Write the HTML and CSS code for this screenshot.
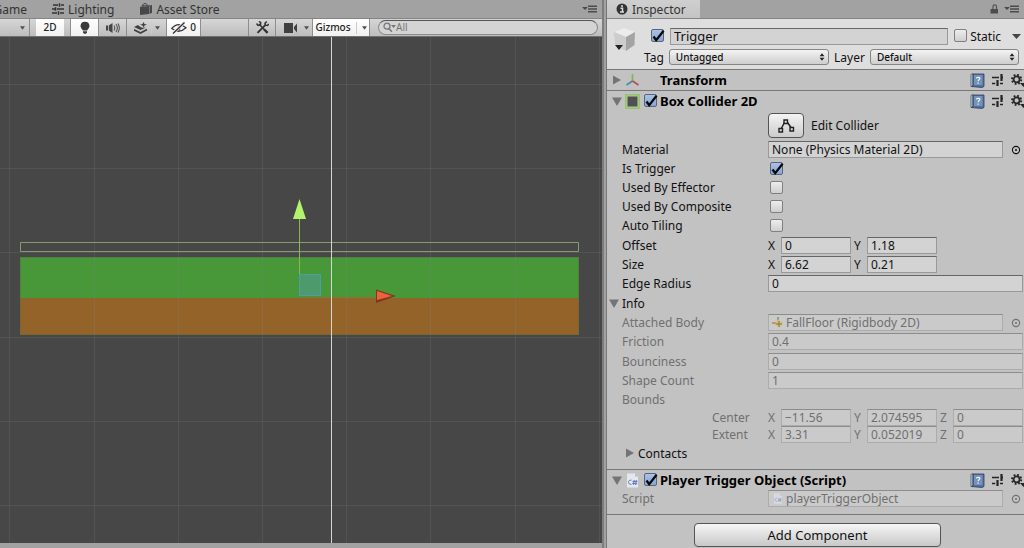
FILE: index.html
```html
<!DOCTYPE html>
<html lang="en">
<head>
<meta charset="utf-8">
<meta name="viewport" content="width=device-width, initial-scale=1">
<title>Scene and Inspector</title>
<link rel="stylesheet" href="styles.css">
</head>
<body>
<svg class="defs" aria-hidden="true">
  <symbol id="check" viewBox="0 0 14 14"><path d="M2.5 7.5 L5.2 11.2 L12.6 1.8" fill="none" stroke="#0a0a0a" stroke-width="2.3"/></symbol>
  <symbol id="menu" viewBox="0 0 16 8"><path d="M0 2h6L3 5z M6 .5h9v1.500H6z M6 3.300h9v1.500H6z M6 6.100h9v1.500H6z" fill="#4b4b4b"/></symbol>
  <symbol id="down" viewBox="0 0 6 4"><path d="M0 0h6L3 4z" fill="#505050"/></symbol>
  <symbol id="updown" viewBox="0 0 6 8"><path d="M0.6 3.3L3 0.2l2.4 3.1z M0.6 4.7L3 7.800l2.400-3.100z" fill="#222"/></symbol>
  <symbol id="fold" viewBox="0 0 10 9"><path d="M0 .5h10L5 9z" fill="#747474"/></symbol>
  <symbol id="unfold" viewBox="0 0 10 10"><path d="M1 .5v9L9 5z" fill="#747474"/></symbol>
  <symbol id="help" viewBox="0 0 15 15"><path d="M1 1.5L3 .5v12.7l-2 .3z" fill="#cfd8e2" stroke="#34465f" stroke-width=".7"/><path d="M3 1h11v12.4l-2 1.1L1.4 13.5 3 12.6z" fill="#52719d" stroke="#2e405c" stroke-width=".8"/><path d="M4 2h8.500v10H4z" fill="#7492ba"/><path d="M6.400 5.400c.1-1.500 3.500-1.500 3.400.1 0 1.200-1.700 1.200-1.700 2.700M8.100 9.400v1.300" fill="none" stroke="#eef4fb" stroke-width="1.200"/></symbol>
  <symbol id="preset" viewBox="0 0 12 12"><path d="M0 3.500h7M9.500 3.500H11M0 9.500h3.200M8 9.500h3" stroke="#242424" stroke-width="1.500"/><path d="M9.500 0v7M5.500 6v6" stroke="#242424" stroke-width="2.200"/></symbol>
  <symbol id="gear" viewBox="0 0 13 13"><circle cx="5.600" cy="5.400" r="4.600" fill="none" stroke="#262626" stroke-width="1.900" stroke-dasharray="1.800 1.810"/><circle cx="5.600" cy="5.400" r="3" fill="none" stroke="#262626" stroke-width="1.800"/><path d="M9 9h7l-3.500 4z" fill="#262626"/></symbol>
  <symbol id="pick" viewBox="0 0 10 10"><circle cx="5" cy="5" r="3.600" fill="none" stroke="currentColor" stroke-width="1.100"/><circle cx="5" cy="5" r="1" fill="currentColor"/></symbol>
  <symbol id="script" viewBox="0 0 12 15"><path d="M.5.5h8l3 3v11H.5z" fill="#e4e8ed"/><path d="M8.500.5v3h3z" fill="#b5bdc8"/><path d="M5 7.200C1 6.500 1 12 5 11.300M6 8.400h5M5.700 10.400h5M7.700 7l-.6 5M9.800 7l-.6 5" fill="none" stroke="#5574c4" stroke-width=".95"/></symbol>
</svg>
<main class="editor">
  <section class="scene" aria-label="Scene">
    <nav class="tabs">
      <a class="tab tab-game" href="#game">Game</a>
      <a class="tab tab-light" href="#lighting">
        <svg width="12" height="12" viewBox="0 0 12 12"><path d="M1 2h5M9 2h3M0 6h3M5 6h7M0 10h5M8 10h4" stroke="#333" stroke-width="1.300"/><path d="M7.500.2v3.600M3.500 4.200v3.600M6.500 8.200v3.600" stroke="#333" stroke-width="1.500"/></svg>Lighting</a>
      <a class="tab" href="#store">
        <svg width="12" height="12" viewBox="0 0 12 12"><path d="M0 4l9-1v8l-9 1zM9.500 3L12 1.800v8L9.500 11z" fill="#484848"/><path d="M0 3.500L2.500 2H12L9 3.300z" fill="#626262"/><path d="M3 4V1.500C3 .3 7 .2 7 1.500V3.500" fill="none" stroke="#444"/></svg>Asset Store</a>
      <button class="icon push menu-scene" aria-label="Scene menu"><svg width="16" height="8"><use href="#menu"/></svg></button>
    </nav>
    <div class="toolbar">
      <button class="tool shade" aria-label="Draw mode"><svg width="5" height="4"><use href="#down"/></svg></button>
      <button class="tool on flat">2D</button>
      <div class="tool-group">
        <button class="tool on sq" aria-label="Scene lighting"><svg width="12" height="14" viewBox="0 0 12 14"><path d="M6 .8a4.500 4.500 0 0 0-4.500 4.300c0 2 1.800 3 2.300 4.400h4.400C8.700 8.100 10.500 7.100 10.500 5.100A4.500 4.500 0 0 0 6 .8zM4 10.300h4v1.200L7 12.800H5L4 11.500z" fill="#3a3a3a"/></svg></button>
        <button class="tool sq" aria-label="Scene audio"><svg width="14" height="10" viewBox="0 0 14 10"><path d="M0 2.500h2v5H0zM2.800 2.500L6.500 0v10L2.800 7.500z" fill="#444"/><path d="M8 2.500q1.500 2.500 0 5M10 1q2.700 4 0 8M12 .5q2.600 4.500 0 9" fill="none" stroke="#555" stroke-width="1.100"/></svg></button>
        <button class="tool fx" aria-label="Effects"><svg width="14" height="12" viewBox="0 0 14 12"><path d="M0 5l4-2 2.500 2 2 .8 3.500-.3L6.500 8z" fill="#404040"/><path d="M0 7.700L6.500 11 13 7.500" fill="none" stroke="#404040" stroke-width="1.700"/><path d="M9.500 0l1 2 2.500.7-2.500.9-1 2-1-2L6 2.700 8.500 2z" fill="#404040"/></svg><i class="split"></i><svg width="5" height="4"><use href="#down"/></svg></button>
        <button class="tool on hid" aria-label="Hidden objects: 0"><svg width="16" height="12" viewBox="0 0 16 12"><path d="M.8 6.500Q7-.8 15 5.800 8 12.300.8 6.500z" fill="none" stroke="#3b3b3b" stroke-width="1.300"/><path d="M8 3q3 2.500 0 6Q5 6 8 3z" fill="#444"/><path d="M2 11L13 1" stroke="#f4f4f4" stroke-width="3"/><path d="M2 11.500L13.500.5" stroke="#333" stroke-width="1.400"/></svg>0</button>
      </div>
      <div class="tool-group push">
        <button class="tool sq edge" aria-label="Tools"><svg width="13" height="13" viewBox="0 0 13 13"><path d="M3 3l8 8.500" stroke="#333" stroke-width="1.500"/><path d="M8 8.200l3.600 3.700" stroke="#333" stroke-width="2.300"/><path d="M.5 2.500L2 4.500 4.500 4 4.700 1.500 3 .3" fill="none" stroke="#333" stroke-width="1.500"/><path d="M1.500 11.800L9.500 3.800" stroke="#333" stroke-width="1.900"/><path d="M10.800.5L9 2.200l.5 2 2 .3 1.300-1.500" fill="none" stroke="#333" stroke-width="1.500"/></svg></button>
        <button class="tool cam" aria-label="Camera"><svg width="14" height="10" viewBox="0 0 14 10"><path d="M0 0h9v10H0zM10 4l3-3.500v9L10 6z" fill="#404040"/></svg><svg width="5" height="4"><use href="#down"/></svg></button>
        <button class="tool on giz">Gizmos<i class="split"></i><svg width="5" height="4"><use href="#down"/></svg></button>
      </div>
      <label class="search"><svg width="13" height="11" viewBox="0 0 13 11"><circle cx="4" cy="4.200" r="3" fill="none" stroke="#777" stroke-width="1.300"/><path d="M6 6.500l2.800 3.300" stroke="#777" stroke-width="1.500"/><path d="M8 3h5l-2.500 3z" fill="#777"/></svg><input type="text" placeholder="All" aria-label="Search scene"></label>
    </div>
    <svg class="view" viewBox="0 0 602 506" preserveAspectRatio="xMidYMid slice" role="img" aria-label="Scene view of a floor with a trigger collider">
      <rect width="602" height="506" fill="#474747"/>
      <rect x="20" y="220" width="559" height="41" fill="#48983a"/>
      <rect x="20" y="261" width="559" height="37" fill="#936329"/>
      <rect x="20.500" y="220.500" width="558" height="77" fill="none" stroke="#5c6c38" stroke-opacity=".5"/>
      <path d="M9.500 0v506M94.500 0v506M178.500 0v506M262.500 0v506M346.500 0v506M430.500 0v506M515.500 0v506M599.500 0v506M0 47.500h602M0 131.500h602M0 215.500h602M0 300.500h602M0 384.500h602M0 468.500h602" stroke="#888" stroke-opacity=".2"/>
      <path d="M20.500 205.500h558v9h-558z" fill="none" stroke="#7f9f70"/>
      <path d="M299.500 180v79" stroke="#8db553"/>
      <path d="M300 259.500h77" stroke="#8a7436"/>
      <rect x="299.500" y="237.500" width="21" height="21" fill="#509b82" fill-opacity=".7" stroke="#4b9daa"/>
      <path d="M299.500 162l6.500 20h-13z" fill="#b4f36c"/>
      <path d="M376 252.500l20 6.500-20 7z" fill="#7e3722"/><path d="M377 254l15 5-15 4z" fill="#ed6239"/>
      <path d="M331.500 0v506" stroke="#d5d5d5"/>
    </svg>
  </section>

  <section class="inspector" aria-label="Inspector">
    <nav class="tabs">
      <a class="tab tab-on" href="#inspector"><svg width="12" height="12" viewBox="0 0 12 12"><circle cx="6" cy="6" r="5.500" fill="#333"/><path d="M6 2v2M4.500 5.300h2V9M4 9h4" fill="none" stroke="#ddd" stroke-width="1.500"/></svg>Inspector</a>
      <button class="icon push" aria-label="Lock"><svg width="9" height="10" viewBox="0 0 9 10"><path d="M.5 5h7.500v4.500H.5z" fill="#4c4c4c"/><path d="M3 5V2.500C3 .3 6.500.3 6.500 2.500V5" fill="none" stroke="#555" stroke-width="1.200"/></svg></button>
      <button class="icon" aria-label="Inspector menu"><svg width="16" height="8"><use href="#menu"/></svg></button>
    </nav>
    <header class="object">
      <svg class="cube" width="24" height="26" viewBox="0 0 24 26"><path d="M1 5L11 1l11 4-9 5z" fill="#ececec"/><path d="M1 5l12 5v14L2 18z" fill="#cdcdcd"/><path d="M22 5l-9 5v14l8.500-6z" fill="#a4a4a4"/><path d="M2 18h8l-4 5z" fill="#222"/></svg>
      <div class="object-rows">
        <div class="object-row">
          <span class="tick lead"><input type="checkbox" checked aria-label="Active"><svg><use href="#check"/></svg></span>
          <input class="field name" type="text" value="Trigger" aria-label="Name">
          <label class="static"><span class="tick"><input type="checkbox"><svg><use href="#check"/></svg></span>Static</label>
          <button class="icon" aria-label="Static options"><svg width="9" height="5" viewBox="0 0 9 5"><path d="M0 0h9L4.500 5z" fill="#444"/></svg></button>
        </div>
        <div class="object-row pops">
          <label for="tag">Tag</label>
          <span class="pop pop-tag"><select id="tag"><option>Untagged</option></select><svg width="6" height="8"><use href="#updown"/></svg></span>
          <label for="layer">Layer</label>
          <span class="pop"><select id="layer"><option>Default</option></select><svg width="6" height="8"><use href="#updown"/></svg></span>
        </div>
      </div>
    </header>

    <section class="component">
      <div class="head">
        <button class="icon fold" aria-label="Expand Transform"><svg width="10" height="10"><use href="#unfold"/></svg></button>
        <svg class="kind" width="15" height="15" viewBox="0 0 15 15"><path d="M7.500 8V1" stroke="#87b54b" stroke-width="1.700"/><path d="M7.500 8L1.500 12" stroke="#4d8aa8" stroke-width="1.700"/><path d="M7.500 8l6 4" stroke="#b5524a" stroke-width="1.700"/></svg>
        <span class="slot"></span>
        <h2>Transform</h2>
        <span class="acts"><button class="icon" aria-label="Help"><svg width="15" height="15"><use href="#help"/></svg></button><button class="icon" aria-label="Presets"><svg width="12" height="12"><use href="#preset"/></svg></button><button class="icon" aria-label="Settings"><svg width="13" height="13"><use href="#gear"/></svg></button></span>
      </div>
    </section>

    <section class="component collider">
      <div class="head">
        <button class="icon fold" aria-label="Collapse Box Collider 2D"><svg width="10" height="9"><use href="#fold"/></svg></button>
        <svg class="kind" width="15" height="15" viewBox="0 0 15 15"><rect x=".8" y=".8" width="13.400" height="13.400" fill="#b9c8a8" stroke="#8dc65a" stroke-width="1.300"/><rect x="2.500" y="2.500" width="10" height="10" fill="#505050"/></svg>
        <span class="tick slot"><input type="checkbox" checked aria-label="Enable Box Collider 2D"><svg><use href="#check"/></svg></span>
        <h2>Box Collider 2D</h2>
        <span class="acts"><button class="icon" aria-label="Help"><svg width="15" height="15"><use href="#help"/></svg></button><button class="icon" aria-label="Presets"><svg width="12" height="12"><use href="#preset"/></svg></button><button class="icon" aria-label="Settings"><svg width="13" height="13"><use href="#gear"/></svg></button></span>
      </div>
      <div class="row edit"><span></span><div class="value"><button class="edit-button" id="edit" aria-labelledby="edit-label"><svg width="17" height="14" viewBox="0 0 17 14"><path d="M3 10L6.500 3.500M9.500 3.500l3.500 5" fill="none" stroke="#222" stroke-width="1.500"/><path d="M6 1h3.500v3.500H6zM1 9.500h3.500V13H1zM12 8.500h3.500V12H12z" fill="#ddd" stroke="#222" stroke-width="1.400"/></svg></button><label id="edit-label" for="edit">Edit Collider</label></div></div>
      <div class="group">
        <div class="row"><label for="mat">Material</label><div class="value"><input class="field" id="mat" type="text" value="None (Physics Material 2D)" readonly><button class="icon pick" aria-label="Pick material"><svg width="10" height="10"><use href="#pick"/></svg></button></div></div>
        <div class="row"><label for="trig">Is Trigger</label><div class="value"><span class="tick"><input id="trig" type="checkbox" checked><svg><use href="#check"/></svg></span></div></div>
        <div class="row"><label for="eff">Used By Effector</label><div class="value"><span class="tick"><input id="eff" type="checkbox"><svg><use href="#check"/></svg></span></div></div>
        <div class="row"><label for="comp">Used By Composite</label><div class="value"><span class="tick"><input id="comp" type="checkbox"><svg><use href="#check"/></svg></span></div></div>
        <div class="row"><label for="tile">Auto Tiling</label><div class="value"><span class="tick"><input id="tile" type="checkbox"><svg><use href="#check"/></svg></span></div></div>
      </div>
      <div class="group">
        <div class="row"><span>Offset</span><div class="value axes"><label class="axis">X<input class="field" type="text" value="0"></label><label class="axis">Y<input class="field" type="text" value="1.18"></label></div></div>
        <div class="row"><span>Size</span><div class="value axes"><label class="axis">X<input class="field" type="text" value="6.62"></label><label class="axis">Y<input class="field" type="text" value="0.21"></label></div></div>
        <div class="row"><label for="edge">Edge Radius</label><div class="value"><input class="field" id="edge" type="text" value="0"></div></div>
      </div>
      <div class="group">
        <div class="row info"><button class="icon fold" aria-label="Collapse Info"><svg width="10" height="9"><use href="#fold"/></svg></button><span>Info</span></div>
        <div class="row dim"><label for="body">Attached Body</label><div class="value"><span class="field object-field"><svg width="12" height="12" viewBox="0 0 12 12"><path d="M6 0v5" stroke="#66a565" stroke-width="1.500"/><path d="M0 6h5" stroke="#d07658" stroke-width="1.500"/><path d="M6 2.500L11 6.500 7 11 3 6.500z" fill="#dfbf55"/><path d="M7 4v3H3.500M7 7v3M7 7h3" fill="none" stroke="#777" stroke-width="1"/></svg><input id="body" type="text" value="FallFloor (Rigidbody 2D)" disabled></span><button class="icon pick" aria-label="Pick body"><svg width="10" height="10"><use href="#pick"/></svg></button></div></div>
        <div class="row dim"><label for="fric">Friction</label><div class="value"><input class="field" id="fric" type="text" value="0.4" disabled></div></div>
      </div>
      <div class="group">
        <div class="row dim"><label for="bounce">Bounciness</label><div class="value"><input class="field" id="bounce" type="text" value="0" disabled></div></div>
        <div class="row dim"><label for="shapes">Shape Count</label><div class="value"><input class="field" id="shapes" type="text" value="1" disabled></div></div>
        <div class="row dim"><span>Bounds</span></div>
      </div>
      <div class="row dim tight"><span class="sub">Center</span><div class="value axes"><label class="axis">X<input class="field" type="text" value="−11.56" disabled></label><label class="axis">Y<input class="field" type="text" value="2.074595" disabled></label><label class="axis">Z<input class="field" type="text" value="0" disabled></label></div></div>
      <div class="row dim tight"><span class="sub">Extent</span><div class="value axes"><label class="axis">X<input class="field" type="text" value="3.31" disabled></label><label class="axis">Y<input class="field" type="text" value="0.052019" disabled></label><label class="axis">Z<input class="field" type="text" value="0" disabled></label></div></div>
      <div class="contacts"><button class="icon fold" aria-label="Expand Contacts"><svg width="10" height="10"><use href="#unfold"/></svg></button>Contacts</div>
    </section>

    <section class="component player">
      <div class="head">
        <button class="icon fold" aria-label="Collapse Player Trigger Object"><svg width="10" height="9"><use href="#fold"/></svg></button>
        <svg class="kind" width="12" height="15"><use href="#script"/></svg>
        <span class="tick slot"><input type="checkbox" checked aria-label="Enable Player Trigger Object"><svg><use href="#check"/></svg></span>
        <h2>Player Trigger Object (Script)</h2>
        <span class="acts"><button class="icon" aria-label="Help"><svg width="15" height="15"><use href="#help"/></svg></button><button class="icon" aria-label="Presets"><svg width="12" height="12"><use href="#preset"/></svg></button><button class="icon" aria-label="Settings"><svg width="13" height="13"><use href="#gear"/></svg></button></span>
      </div>
      <div class="row dim"><label for="script-field">Script</label><div class="value"><span class="field object-field"><svg class="faded" width="12" height="11"><use href="#script"/></svg><input id="script-field" type="text" value="playerTriggerObject" disabled></span><button class="icon pick" aria-label="Pick script"><svg width="10" height="10"><use href="#pick"/></svg></button></div></div>
    </section>
    <button class="add">Add Component</button>
  </section>
</main>
</body>
</html>
```
FILE: styles.css
```css
* { box-sizing: border-box; }
body {
  margin: 0;
  background: #a2a2a2;
  color: #111;
  font: 12px/17px "Noto Sans", "Open Sans", sans-serif;
}
button, input, select { font: inherit; color: inherit; margin: 0; }
svg { display: block; flex: none; }
.defs { position: absolute; width: 0; height: 0; }
.editor {
  display: grid;
  grid-template-columns: minmax(0, 604fr) minmax(0, 418fr);
  gap: 2px;
  min-height: 100vh;
}
.icon {
  display: grid;
  place-items: center;
  flex: none;
  padding: 0;
  border: 0;
  background: none;
}
.push { margin-left: auto; }

/* Tabs */
.tabs { display: flex; align-items: center; height: 18px; background: #a2a2a2; }
.tab {
  display: flex;
  align-items: center;
  gap: 4px;
  height: 18px;
  color: #333;
  text-decoration: none;
}
.tab-game { width: 27px; justify-content: flex-end; overflow: hidden; }
.tab-light { margin: 0 26px 0 25px; }
.tab-on {
  width: 93px;
  padding-left: 9px;
  background: linear-gradient(#cfcfcf, #c4c4c4);
}
.menu-scene { margin-right: 4px; }

/* Scene */
.scene {
  display: flex;
  flex-direction: column;
  padding-bottom: 5px;
  border-right: 2px solid #7d7d7d;
  min-width: 0;
}
.toolbar {
  display: flex;
  height: 19px;
  border-top: 1px solid #858585;
  border-bottom: 1px solid #707070;
  background: linear-gradient(#d6d6d6, #bdbdbd);
}
.tool-group { display: flex; }
.tool {
  display: flex;
  align-items: center;
  justify-content: center;
  gap: 3px;
  padding: 0;
  border: 0;
  border-right: 1px solid #8e8e8e;
  background: none;
  color: #222;
  font-size: 10px;
  font-weight: 500;
}
.on { background: linear-gradient(#fff, #f0f0f0); }
.shade { width: 30px; justify-content: flex-end; padding-right: 4px; }
.flat { width: 28px; margin: 0 6px; border: 0; }
.flat + .tool-group { border-left: 1px solid #8e8e8e; }
.sq { width: 28px; }
.edge { border-left: 1px solid #8e8e8e; }
.fx { width: 40px; }
.hid { width: 34px; }
.cam { width: 37px; gap: 6px; padding-left: 5px; }
.giz { width: 57px; gap: 5px; }
.split { width: 1px; height: 12px; background: #ccc; }
.search {
  display: flex;
  align-items: center;
  width: 220px;
  margin: 1px 4px 1px 8px;
  padding-left: 4px;
  border: 1px solid #8b8b8b;
  border-top-color: #555;
  border-radius: 8px;
  background: #d4d4d4;
}
.search input {
  width: 100%;
  min-width: 0;
  height: 14px;
  padding: 0;
  border: 0;
  background: none;
  font-size: 10px;
}
.search input::placeholder { color: #777; opacity: 1; }
.view { flex: 1; width: 100%; min-height: 0; height: 0; }

/* Inspector */
.inspector {
  display: flex;
  flex-direction: column;
  min-width: 0;
  border-left: 1px solid #777;
  background: #c2c2c2;
}
.inspector .tabs { gap: 5px; padding-right: 4px; }
.object {
  display: flex;
  gap: 2px;
  height: 51px;
  padding: 8px 5px 0 6px;
  border-top: 1px solid #858585;
  background: #dedede;
}
.object-rows { flex: 1; min-width: 0; }
.object-row { display: flex; align-items: center; height: 18px; }
.lead { margin: 0 5px 0 12px; }
.name { flex: 1; font-size: 13px; }
.static { display: flex; align-items: center; gap: 2px; margin: 0 11px 0 6px; }
.object-row .icon { margin-right: -2px; }
.pops { gap: 5px; height: 24px; padding-left: 5px; }
.pop { display: grid; align-items: center; flex: 148 1 0; min-width: 0; }
.pop-tag { flex-grow: 159; }
.pop > * { grid-area: 1 / 1; }
.pop svg { justify-self: end; margin-right: 4px; pointer-events: none; }
.pop select {
  appearance: none;
  width: 100%;
  height: 16px;
  padding: 0 6px;
  border: 1px solid #858585;
  border-radius: 3px;
  background: linear-gradient(#f3f3f3, #cecece);
  font-size: 10px;
  font-weight: 500;
  line-height: 14px;
}

.tick { display: grid; flex: none; width: 14px; height: 14px; }
.tick > * { grid-area: 1 / 1; width: 14px; height: 14px; pointer-events: none; }
.tick input {
  appearance: none;
  width: 13px;
  height: 13px;
  border: 1px solid #808080;
  border-radius: 2px;
  background: linear-gradient(#ededed, #cfcfcf);
  pointer-events: auto;
}
.tick input:checked { border-color: #596579; background: linear-gradient(#a9c2e5, #86a6d4); }
.tick svg { visibility: hidden; }
.tick input:checked + svg { visibility: visible; }

.component { border-top: 1px solid #777; }
.head { display: flex; align-items: center; height: 20px; padding-left: 4px; }
.fold { width: 12px; margin-right: 2px; }
.kind { width: 15px; }
.slot { width: 14px; margin: 0 2px 0 4px; }
h2 { margin: 0; font-size: 13px; line-height: 17px; font-weight: 700; color: #000; white-space: nowrap; }
.acts { display: flex; align-items: center; gap: 7px; margin-left: auto; }

.row {
  display: grid;
  grid-template-columns: 146px minmax(0, 1fr);
  align-items: center;
  height: 19px;
  padding: 0 1px 0 15px;
  white-space: nowrap;
}
.value { display: flex; align-items: center; min-width: 0; }
.value .tick { margin-left: 2px; }
.field {
  flex: 1;
  width: 100%;
  min-width: 0;
  height: 17px;
  padding: 0 3px;
  border: 1px solid #999;
  border-top-color: #666;
  border-radius: 0;
  background: #d3d3d3;
  line-height: 15px;
}
.edit { height: 29px; }
.edit .value { gap: 7px; }
.edit-button {
  display: grid;
  place-items: center;
  width: 36px;
  height: 25px;
  padding: 0;
  border: 1px solid #555;
  border-radius: 4px;
  background: linear-gradient(#f4f4f4, #cbcbcb);
}
.group + .group { margin-top: 1px; }
.pick { width: 10px; margin: 0 2px 0 8px; }
.axes { display: grid; grid-template-columns: repeat(3, minmax(0, 1fr)); gap: 3px; }
.axis { display: grid; grid-template-columns: 13px minmax(0, 1fr); align-items: center; }
.info { display: flex; padding-left: 1px; }
.dim { color: #707070; }
.dim .field { border-color: #acacac; border-top-color: #8c8c8c; background: #cacaca; }
.object-field { display: flex; align-items: center; gap: 2px; }
.object-field input { flex: 1; min-width: 0; height: 15px; padding: 0; border: 0; background: none; line-height: 15px; }
.faded { opacity: .5; }
.tight { height: 17px; }
.sub { padding-left: 90px; }
.contacts { display: flex; align-items: center; height: 26px; padding: 0 0 6px 17px; }
.player { border-bottom: 1px solid #777; }
.player .row { height: 15px; margin-bottom: 9px; }
.add {
  align-self: center;
  width: 59%;
  height: 24px;
  margin: 8px 0 1px 4px;
  padding: 0;
  border: 1px solid #555;
  border-radius: 4px;
  background: linear-gradient(#f6f6f6, #c8c8c8);
  font-size: 13px;
}
```
